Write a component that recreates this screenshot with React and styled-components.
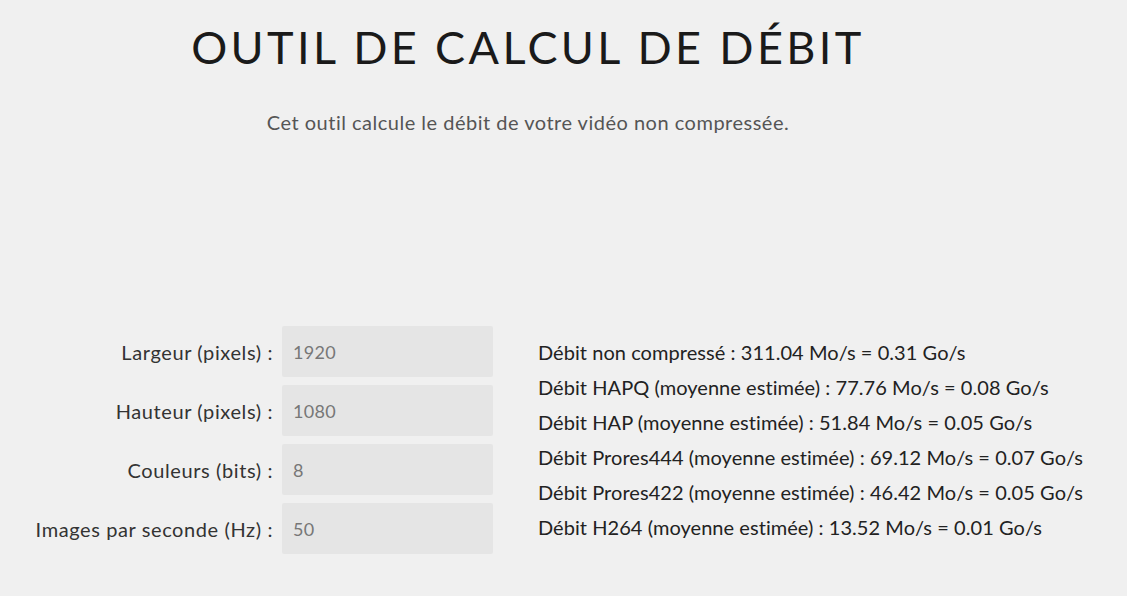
import React from 'react';
import styled, { createGlobalStyle } from 'styled-components';

const GlobalStyle = createGlobalStyle`
    html, body {
        margin: 0;
        padding: 0;
        background: #f0f0f0;
    }
    body {
        font-family: Lato, "Open Sans", sans-serif;
        color: #333;
    }
`;

const Page = styled.div`
    width: 1056px;
    padding-top: 22px;
`;

const Header = styled.header`
    text-align: center;
`;

const Title = styled.h1`
    margin: 0;
    font-family: Lato, sans-serif;
    font-weight: 400;
    font-size: 45px;
    line-height: 50px;
    letter-spacing: 3.4px;
    color: #1a1a1a;
`;

const Intro = styled.p`
    margin: 37px 0 0;
    font-size: 20px;
    line-height: 26px;
    letter-spacing: 0.5px;
    color: #555;
`;

const Calculator = styled.div`
    display: flex;
    gap: 45px;
    margin-top: 191px;
`;

const Form = styled.div`
    display: grid;
    grid-template-columns: 273px 211px;
    column-gap: 9px;
    row-gap: 8px;
`;

const Label = styled.label`
    display: flex;
    align-items: center;
    justify-content: flex-end;
    font-size: 20px;
    letter-spacing: 0.6px;
    color: #333;
    white-space: nowrap;
`;

const Field = styled.input`
    box-sizing: border-box;
    height: 51px;
    width: 211px;
    border: none;
    border-radius: 2px;
    background: #e5e5e5;
    padding: 0 11px;
    font-family: Lato, sans-serif;
    font-size: 18px;
    letter-spacing: 0.3px;
    color: #777;
    outline: none;
`;

const Results = styled.div`
    display: flex;
    flex-direction: column;
    padding-top: 9px;
`;

const Result = styled.div`
    font-size: 20px;
    line-height: 35px;
    letter-spacing: 0.05px;
    color: #222;
    white-space: nowrap;
`;

const fields = [
    { id: 'w', label: 'Largeur (pixels) :', value: '1920' },
    { id: 'h', label: 'Hauteur (pixels) :', value: '1080' },
    { id: 'c', label: 'Couleurs (bits) :', value: '8' },
    { id: 'f', label: 'Images par seconde (Hz) :', value: '50' },
];

// débit en Mo/s pour chaque format
const rates = [
    ['Débit non compressé', 311.04],
    ['Débit HAPQ (moyenne estimée)', 77.76],
    ['Débit HAP (moyenne estimée)', 51.84],
    ['Débit Prores444 (moyenne estimée)', 69.12],
    ['Débit Prores422 (moyenne estimée)', 46.42],
    ['Débit H264 (moyenne estimée)', 13.52],
];

const App = () => {
    return (
        <Page>
            <GlobalStyle />
            <Header>
                <Title>OUTIL DE CALCUL DE DÉBIT</Title>
                <Intro>Cet outil calcule le débit de votre vidéo non compressée.</Intro>
            </Header>
            <Calculator>
                <Form>
                    {fields.map(f => (
                        <React.Fragment key={f.id}>
                            <Label htmlFor={f.id}>{f.label}</Label>
                            <Field id={f.id} defaultValue={f.value} />
                        </React.Fragment>
                    ))}
                </Form>
                <Results>
                    {rates.map(([name, mo]) => (
                        <Result key={name}>
                            {name} : {mo.toFixed(2)} Mo/s = {(mo / 1000).toFixed(2)} Go/s
                        </Result>
                    ))}
                </Results>
            </Calculator>
        </Page>
    );
};

export default App;
